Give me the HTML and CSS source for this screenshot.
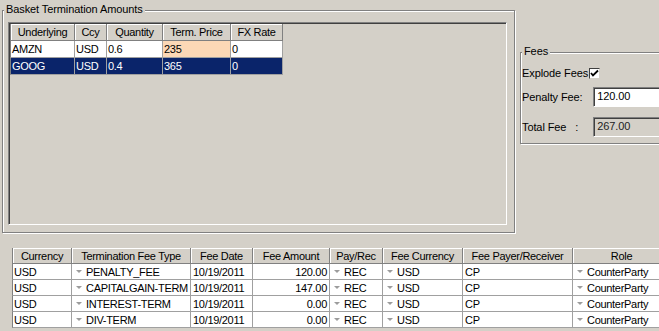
FILE: index.html
```html
<!DOCTYPE html>
<html lang="en">
<head>
    <meta charset="UTF-8">
    <title>Basket Termination</title>
    <link rel="stylesheet" href="styles.css">
</head>
<body>
    <div class="top">
        <!-- basket amounts -->
        <div class="group basket">
            <span class="legend">Basket Termination Amounts</span>
            <div class="sunken">
                <table class="grid basket-grid">
                    <tr>
                        <th class="c-und">Underlying</th>
                        <th class="c-ccy">Ccy</th>
                        <th class="c-qty">Quantity</th>
                        <th class="c-px">Term. Price</th>
                        <th class="c-fx">FX Rate</th>
                    </tr>
                    <tr>
                        <td>AMZN</td>
                        <td>USD</td>
                        <td>0.6</td>
                        <td class="edit">235</td>
                        <td>0</td>
                    </tr>
                    <tr class="selected">
                        <td>GOOG</td>
                        <td>USD</td>
                        <td>0.4</td>
                        <td>365</td>
                        <td>0</td>
                    </tr>
                </table>
            </div>
        </div>

        <!-- fees -->
        <div class="group fees">
            <span class="legend">Fees</span>
            <div class="fee-row first">
                <span class="fee-label short">Explode Fees</span>
                <span class="check">
                    <svg width="9" height="9" viewBox="0 0 9 9"><path d="M1 4 L3 6.5 L8 1.5" fill="none" stroke="#000" stroke-width="1.8"/></svg>
                </span>
            </div>
            <div class="fee-row">
                <span class="fee-label">Penalty Fee:</span>
                <span class="field">120.00</span>
            </div>
            <div class="fee-row">
                <span class="fee-label">Total Fee&nbsp;&nbsp;&nbsp;:</span>
                <span class="field disabled">267.00</span>
            </div>
        </div>
    </div>

    <!-- fee lines -->
    <table class="grid fee-grid">
        <tr>
            <th class="f-ccy">Currency</th>
            <th class="f-type">Termination Fee Type</th>
            <th class="f-date">Fee Date</th>
            <th class="f-amt">Fee Amount</th>
            <th class="f-pay">Pay/Rec</th>
            <th class="f-fccy">Fee Currency</th>
            <th class="f-payer">Fee Payer/Receiver</th>
            <th class="f-role">Role</th>
        </tr>
        <tr>
            <td class="flush">USD</td>
            <td class="dd">PENALTY_FEE</td>
            <td>10/19/2011</td>
            <td class="num">120.00</td>
            <td class="dd">REC</td>
            <td class="dd">USD</td>
            <td>CP</td>
            <td class="dd">CounterParty</td>
        </tr>
        <tr>
            <td class="flush">USD</td>
            <td class="dd">CAPITALGAIN-TERM</td>
            <td>10/19/2011</td>
            <td class="num">147.00</td>
            <td class="dd">REC</td>
            <td class="dd">USD</td>
            <td>CP</td>
            <td class="dd">CounterParty</td>
        </tr>
        <tr>
            <td class="flush">USD</td>
            <td class="dd">INTEREST-TERM</td>
            <td>10/19/2011</td>
            <td class="num">0.00</td>
            <td class="dd">REC</td>
            <td class="dd">USD</td>
            <td>CP</td>
            <td class="dd">CounterParty</td>
        </tr>
        <tr>
            <td class="flush">USD</td>
            <td class="dd">DIV-TERM</td>
            <td>10/19/2011</td>
            <td class="num">0.00</td>
            <td class="dd">REC</td>
            <td class="dd">USD</td>
            <td>CP</td>
            <td class="dd">CounterParty</td>
        </tr>
    </table>
</body>
</html>
```

FILE: styles.css
```css
html,body{
    margin: 0;
    padding: 0;
}
body{
    width: 659px;
    height: 331px;
    overflow: hidden;
    background-color: #d4d0c8;
    color: #000;
    font-family: "Liberation Sans", Arial, sans-serif;
    font-size: 11px;
    letter-spacing: -0.1px;
}
.top{
    display: flex;
    align-items: flex-start;
}
/* etched group box */
.group{
    position: relative;
    box-sizing: border-box;
    border: 1px solid #808080;
    box-shadow: 1px 1px 0 #fff, inset 1px 1px 0 #fff;
}
.group .legend{
    position: absolute;
    top: -8px;
    left: 1px;
    padding: 0 2px;
    line-height: 13px;
    background-color: #d4d0c8;
    white-space: nowrap;
}
.basket{
    width: 513px;
    height: 223px;
    margin: 10px 0 0 2px;
    padding: 11px 7px 7px 5px;
}
.sunken{
    box-sizing: border-box;
    width: 499px;
    height: 203px;
    padding: 1px;
    border: 1px solid;
    border-color: #808080 #fff #fff #808080;
    box-shadow: inset 1px 1px 0 #404040;
}
/* tables */
.grid{
    border-collapse: separate;
    border-spacing: 0;
    table-layout: fixed;
    font-size: 11px;
    letter-spacing: -0.3px;
}
.grid th,
.grid td{
    box-sizing: border-box;
    padding: 0 2px;
    white-space: nowrap;
    overflow: hidden;
    text-align: left;
    font-weight: normal;
}
.grid th{
    text-align: center;
    background-color: #d4d0c8;
    border-right: 1px solid #808080;
    border-bottom: 1px solid #808080;
    box-shadow: inset 1px 1px 0 #fff;
}
.grid td{
    background-color: #fff;
    border-right: 1px solid #a0a0a0;
    border-bottom: 1px solid #a0a0a0;
}
.grid tr > :first-child{
    border-left: 1px solid #808080;
}
.basket-grid{
    width: 273px;
}
.basket-grid th,
.basket-grid td{
    height: 17px;
}
.basket-grid td{
    padding-left: 1px;
}
.c-und{ width: 65px; }
.c-ccy{ width: 32px; }
.c-qty{ width: 56px; }
.c-px{ width: 68px; }
.c-fx{ width: 52px; }
.basket-grid td.edit{
    background-color: #fcd8b6;
}
.basket-grid tr.selected td{
    background-color: #0a246a;
    color: #fff;
}
/* fees */
.fees{
    width: 160px;
    height: 92px;
    margin: 52px 0 0 5px;
    padding: 13px 0 0 1px;
}
.fee-row{
    display: flex;
    align-items: center;
    height: 20px;
    margin-bottom: 10px;
}
.fee-row.first{
    height: 14px;
    margin-bottom: 7px;
}
.fee-label{
    width: 75px;
    white-space: pre;
}
.fee-label.short{
    width: auto;
    margin-right: 1px;
}
.check{
    box-sizing: border-box;
    width: 11px;
    height: 11px;
    background-color: #fff;
    border: 1px solid #404040;
    border-right-color: #d4d0c8;
    border-bottom-color: #d4d0c8;
    display: flex;
    align-items: center;
    justify-content: center;
}
.field{
    box-sizing: border-box;
    width: 90px;
    height: 20px;
    padding: 0 3px;
    line-height: 16px;
    background-color: #fff;
    border: 1px solid;
    border-color: #808080 #fff #fff #808080;
    box-shadow: inset 1px 1px 0 #404040;
}
.field.disabled{
    background-color: #d4d0c8;
    color: #222;
}
/* fee lines */
.fee-grid{
    width: 659px;
    margin: 15px 0 0 12px;
}
.fee-grid th,
.fee-grid td{
    height: 16px;
}
.f-ccy{ width: 60px; }
.f-type{ width: 119px; }
.f-date{ width: 62px; }
.f-amt{ width: 77px; }
.f-pay{ width: 53px; }
.f-fccy{ width: 80px; }
.f-payer{ width: 110px; }
.f-role{ width: 98px; }
.fee-grid td.flush{
    padding-left: 1px;
}
.fee-grid td.num{
    text-align: right;
}
.fee-grid td.dd{
    padding-left: 4px;
}
.fee-grid td.dd::before{
    content: "";
    display: inline-block;
    width: 0;
    height: 0;
    margin: 0 4px 3px 0;
    vertical-align: middle;
    border-left: 3px solid transparent;
    border-right: 3px solid transparent;
    border-top: 3px solid #9c9c9c;
}
```
